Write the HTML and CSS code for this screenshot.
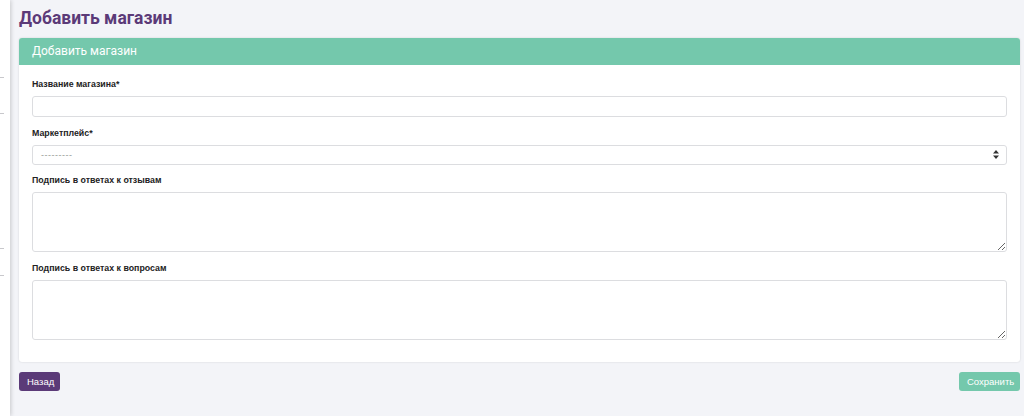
FILE: index.html
```html
<!DOCTYPE html>
<html lang="ru">
<head>
  <meta charset="UTF-8">
  <title>Добавить магазин</title>
  <link rel="stylesheet" href="styles.css">
</head>
<body>
<div class="layout">
  <aside class="sidebar">
    <span class="sep sep-1"></span>
    <span class="sep sep-2"></span>
    <span class="sep sep-3"></span>
    <span class="sep sep-4"></span>
  </aside>
  <main class="content">
    <h1 class="page-title">Добавить магазин</h1>
    <form class="card">
      <div class="card-header">Добавить магазин</div>
      <div class="card-body">
        <div class="field">
          <label class="field-label">Название магазина*</label>
          <input class="field-input" type="text">
        </div>
        <div class="field">
          <label class="field-label">Маркетплейс*</label>
          <div class="select">
            <span class="select-value">---------</span>
            <svg class="select-arrows" width="6" height="9" viewBox="0 0 6 9">
              <path d="M3 0 L6 3.5 H0 Z M3 9 L6 5.5 H0 Z" fill="#333"/>
            </svg>
          </div>
        </div>
        <div class="field">
          <label class="field-label">Подпись в ответах к отзывам</label>
          <textarea class="field-textarea"></textarea>
        </div>
        <div class="field">
          <label class="field-label">Подпись в ответах к вопросам</label>
          <textarea class="field-textarea"></textarea>
        </div>
      </div>
    </form>
    <div class="actions">
      <button class="btn btn-back" type="button">Назад</button>
      <button class="btn btn-save" type="button">Сохранить</button>
    </div>
  </main>
</div>
</body>
</html>
```

FILE: styles.css
```css
* {
  margin: 0;
  padding: 0;
  box-sizing: border-box;
}

body {
  background-color: #f3f4f8;
  font-family: "Liberation Sans", Arial, sans-serif;
  color: #222;
  height: 416px;
  overflow: hidden;
}

.layout {
  display: flex;
  height: 416px;
}

.sidebar {
  width: 10px;
  flex-shrink: 0;
  background-color: #fff;
  box-shadow: 1px 0 4px rgba(0, 0, 0, 0.18);
  position: relative;
}

.sep {
  position: absolute;
  left: 0;
  width: 4px;
  height: 1px;
  background-color: #c8c8cc;
}

.sep-1 { top: 77px; }
.sep-2 { top: 113px; }
.sep-3 { top: 248px; }
.sep-4 { top: 275px; }

.content {
  flex: 1;
  padding: 8px 4px 0 9px;
}

.page-title {
  font-family: Roboto, sans-serif;
  font-size: 17.5px;
  font-weight: 700;
  color: #5b3a78;
  line-height: 20px;
  height: 30px;
}

.card {
  background-color: #fff;
  border-radius: 3px;
  box-shadow: 0 0 2px rgba(0, 0, 0, 0.15);
  overflow: hidden;
}

.card-header {
  background-color: #74c8ac;
  color: #fff;
  font-family: Roboto, sans-serif;
  font-size: 12px;
  height: 27px;
  line-height: 27px;
  padding-left: 13px;
}

.card-body {
  padding: 14px 13px 22px 13px;
}

.field + .field {
  margin-top: 10.5px;
}

.field-label {
  display: block;
  font-size: 8.8px;
  font-weight: 700;
  color: #222;
  line-height: 11px;
  margin-bottom: 6px;
}

.field-input,
.select,
.field-textarea {
  display: block;
  width: 100%;
  border: 1px solid #dcdde0;
  border-radius: 3px;
  background-color: #fff;
}

.field-input {
  height: 21px;
}

.select {
  height: 20px;
  display: flex;
  align-items: center;
  justify-content: space-between;
  padding: 0 7px 0 8px;
}

.select-value {
  font-size: 9px;
  color: #999;
  letter-spacing: 0.5px;
}

.field-textarea {
  height: 60px;
  resize: vertical;
}

.actions {
  display: flex;
  justify-content: space-between;
  margin-top: 10px;
}

.btn {
  border: none;
  border-radius: 3px;
  color: #fff;
  font-family: "Liberation Sans", Arial, sans-serif;
  font-size: 9.5px;
  height: 19px;
  padding: 0 8px;
}

.btn-back {
  background-color: #5b3a78;
  width: 41px;
}

.btn-save {
  background-color: #74c8ac;
  width: 61px;
}
```
